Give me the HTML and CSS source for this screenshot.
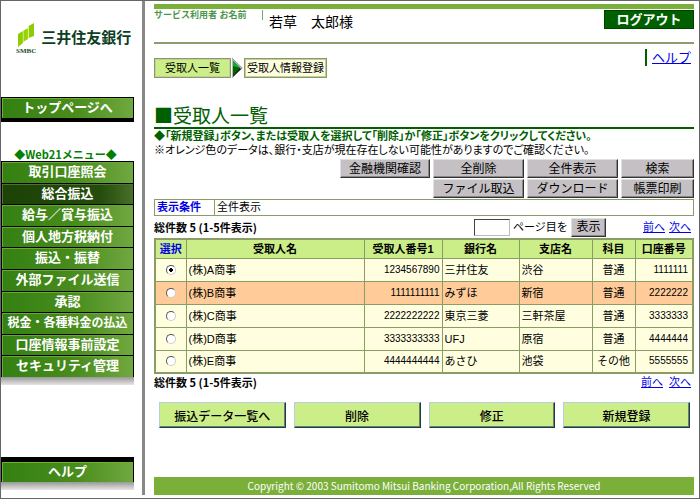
FILE: index.html
```html
<!DOCTYPE html>
<html lang="ja">
<head>
<meta charset="utf-8">
<title>受取人一覧</title>
<link rel="stylesheet" href="styles.css">
</head>
<body>
<div class="page">
  <aside class="side">
    <div class="brand">
      <div class="mark">
        <svg width="18" height="25" viewBox="0 0 18 25" aria-hidden="true">
          <path fill="#8ccc00" d="M1 12L6 9V21L1 25z"/>
          <path fill="#98d400" d="M6 9L11 6V17L6 20z"/>
          <path fill="#8ccc00" d="M11.500 4L17 1V14L11.500 16z"/>
          <path fill="none" stroke="#e4f4b8" stroke-width="0.800" d="M6.200 8V21M11.300 4V17"/>
        </svg>
        <span class="mark-text">SMBC</span>
      </div>
      <span class="brand-name">三井住友銀行</span>
    </div>
    <a class="bar bar-top" href="#">トップページへ</a>
    <nav class="menu-block">
      <h2 class="menu-title">◆Web21メニュー◆</h2>
      <div class="menu">
        <a class="item" href="#">取引口座照会</a>
        <a class="item current" href="#">総合振込</a>
        <a class="item" href="#">給与／賞与振込</a>
        <a class="item" href="#">個人地方税納付</a>
        <a class="item" href="#">振込・振替</a>
        <a class="item" href="#">外部ファイル送信</a>
        <a class="item" href="#">承認</a>
        <a class="item long" href="#">税金・各種料金の払込</a>
        <a class="item" href="#">口座情報事前設定</a>
        <a class="item" href="#">セキュリティ管理</a>
      </div>
      <div class="shade"></div>
    </nav>
    <div class="side-foot">
      <a class="bar bar-help" href="#">ヘルプ</a>
      <div class="shade"></div>
    </div>
  </aside>
  <main class="main">
    <header class="head">
      <span class="user-label">サービス利用者 お名前</span>
      <span class="user-name">若草　太郎様</span>
      <button class="logout" type="button">ログアウト</button>
    </header>
    <div class="trail">
      <span class="crumb on">受取人一覧</span>
      <svg class="arrow" width="11" height="20" viewBox="0 0 11 20" aria-hidden="true">
        <path fill="#222" d="M0 0L10.500 10L0 20z"/>
        <path fill="#b8b8b8" d="M0 0L10.500 10L9 11L1 3V20H0z"/>
        <path fill="#00b428" d="M1 3L8 10H1z"/>
        <path fill="#006400" d="M1 8L8 10L1 17z"/>
      </svg>
      <span class="crumb">受取人情報登録</span>
      <span class="help"><a href="#">ヘルプ</a></span>
    </div>
    <h1 class="title">■受取人一覧</h1>
    <p class="lead strong">◆「新規登録」ボタン、または受取人を選択して「削除」か「修正」ボタンをクリックしてください。</p>
    <p class="lead">※オレンジ色のデータは、銀行・支店が現在存在しない可能性がありますのでご確認ください。</p>
    <div class="tools">
      <button class="grey" type="button">金融機関確認</button>
      <button class="grey" type="button">全削除</button>
      <button class="grey" type="button">全件表示</button>
      <button class="grey" type="button">検索</button>
      <button class="grey second" type="button">ファイル取込</button>
      <button class="grey" type="button">ダウンロード</button>
      <button class="grey" type="button">帳票印刷</button>
    </div>
    <div class="cond"><span class="cond-label">表示条件</span><span class="cond-value">全件表示</span></div>
    <div class="pager">
      <span class="count">総件数 5 (1-5件表示)</span>
      <input class="page-no" id="page-no" type="text">
      <label class="page-label" for="page-no">ページ目を</label>
      <button class="grey go" type="button">表示</button>
      <span class="links"><a href="#">前へ</a><a href="#">次へ</a></span>
    </div>
    <table class="list">
      <colgroup><col class="c1"><col class="c2"><col class="c3"><col class="c4"><col class="c5"><col class="c6"><col class="c7"></colgroup>
      <thead>
        <tr><th class="pick">選択</th><th>受取人名</th><th>受取人番号1</th><th>銀行名</th><th>支店名</th><th>科目</th><th>口座番号</th></tr>
      </thead>
      <tbody>
        <tr><td class="mid"><input type="radio" name="payee" aria-label="(株)A商事" checked></td><td>(株)A商事</td><td class="num">1234567890</td><td>三井住友</td><td>渋谷</td><td class="mid">普通</td><td class="num acct">1111111</td></tr>
        <tr class="warn"><td class="mid"><input type="radio" name="payee" aria-label="(株)B商事"></td><td>(株)B商事</td><td class="num">1111111111</td><td>みずほ</td><td>新宿</td><td class="mid">普通</td><td class="num acct">2222222</td></tr>
        <tr><td class="mid"><input type="radio" name="payee" aria-label="(株)C商事"></td><td>(株)C商事</td><td class="num">2222222222</td><td>東京三菱</td><td>三軒茶屋</td><td class="mid">普通</td><td class="num acct">3333333</td></tr>
        <tr><td class="mid"><input type="radio" name="payee" aria-label="(株)D商事"></td><td>(株)D商事</td><td class="num">3333333333</td><td>UFJ</td><td>原宿</td><td class="mid">普通</td><td class="num acct">4444444</td></tr>
        <tr><td class="mid"><input type="radio" name="payee" aria-label="(株)E商事"></td><td>(株)E商事</td><td class="num">4444444444</td><td>あさひ</td><td>池袋</td><td class="mid">その他</td><td class="num acct">5555555</td></tr>
      </tbody>
    </table>
    <div class="pager bottom">
      <span class="count">総件数 5 (1-5件表示)</span>
      <span class="links"><a href="#">前へ</a><a href="#">次へ</a></span>
    </div>
    <div class="actions">
      <button class="act" type="button">振込データ一覧へ</button>
      <button class="act" type="button">削除</button>
      <button class="act" type="button">修正</button>
      <button class="act" type="button">新規登録</button>
    </div>
    <footer class="foot">Copyright © 2003 Sumitomo Mitsui Banking Corporation,All Rights Reserved</footer>
  </main>
</div>
</body>
</html>
```
FILE: styles.css
```css
* { box-sizing: border-box; }

body {
  margin: 0;
  background: #fff;
  color: #000;
  font: 11px/14px "Liberation Sans", "Noto Sans CJK JP", sans-serif;
}

h1, h2, p { margin: 0; }

button, input { font-family: inherit; }

a { color: #0000e6; }

.page {
  display: grid;
  grid-template-columns: 144px 1fr;
  min-height: calc(100vh - 1px);
  padding-bottom: 3px;
  border: 1px solid #666;
}

/* sidebar */
.side {
  display: flex;
  flex-direction: column;
  padding-right: 8px;
  border-right: 3px solid #888;
}

.brand {
  display: flex;
  align-items: flex-start;
  gap: 5px;
  height: 96px;
  padding: 21px 0 0 15px;
}

.mark {
  display: flex;
  flex-direction: column;
  align-items: center;
}

.mark-text {
  color: #1e4a2a;
  font: bold 7px/9px "Liberation Serif", serif;
}

.brand-name {
  padding-top: 6px;
  color: #0c4024;
  font-size: 15px;
  font-weight: bold;
  line-height: 20px;
}

.bar, .item {
  color: #fff;
  font-size: 13px;
  font-weight: bold;
  text-align: center;
  text-decoration: none;
  background: linear-gradient(90deg, #348012, #488c1c 55%, #70a840);
}

.bar {
  display: block;
  line-height: 20px;
  border: 1px solid #000;
  box-shadow: inset 1px 1px #6cb42c;
}

.bar-top { border-bottom-width: 4px; }

.bar-help { border-top-width: 5px; border-bottom: 0; }

.menu-block { margin-top: 26px; }

.menu-title {
  padding-right: 4px;
  color: #008000;
  font-family: "Noto Sans CJK JP", sans-serif;
  font-size: 11px;
  line-height: 13px;
  text-align: center;
}

.menu {
  display: grid;
  grid-auto-rows: 1fr;
  gap: 1px;
  height: 216px;
  padding: 1px 1px 0;
  background: #000;
}

.item {
  line-height: 20px;
  box-shadow: inset 1px 1px #6aa83c;
}

.item.current {
  background: linear-gradient(90deg, #1c4206, #244c0c 75%, #487028);
  box-shadow: inset 1px 1px #507038;
}

.item.long { font-size: 12px; }

.shade {
  height: 8px;
  background: linear-gradient(#999, #e8e4e4);
}

.side-foot { margin-top: auto; padding-bottom: 5px; }

/* main column */
.main {
  display: flex;
  flex-direction: column;
  padding: 3px 5px 0 9px;
}

.head {
  display: flex;
  align-items: flex-start;
  height: 40px;
  border-top: 5px solid #7ab03a;
  border-bottom: 2px solid #8c9c6c;
}

.user-label {
  width: 109px;
  margin-top: 1px;
  border-right: 1px solid #78a878;
  color: #4c964c;
  font-size: 9px;
  font-weight: bold;
  line-height: 10px;
  white-space: nowrap;
}

.user-name {
  padding: 3px 0 0 6px;
  font-size: 14px;
  line-height: 20px;
}

.logout {
  width: 90px;
  height: 19px;
  margin: 1px 0 0 auto;
  padding: 0;
  border: 1px solid #004000;
  background: #006000;
  color: #fff;
  font-size: 13px;
  font-weight: bold;
  line-height: 16px;
}

.trail {
  display: flex;
  align-items: flex-start;
  padding-top: 14px;
}

.crumb {
  padding: 0 2px;
  border: 1px solid #889a68;
  background: #ffffe0;
  line-height: 18px;
  box-shadow: inset 0 0 0 1px #c4ce9c;
}

.crumb.on { padding: 0 10px; background: #ccee88; }

.arrow { margin: 0 1px; }

.help {
  margin: -9px 3px 0 auto;
  padding-left: 5px;
  border-left: 2px solid #006000;
  font-size: 13px;
  line-height: 17px;
}

.title {
  margin-top: 24px;
  border-bottom: 2px solid #006000;
  color: #006000;
  font-family: "Noto Sans CJK JP", sans-serif;
  font-size: 19px;
  font-weight: 400;
  line-height: 25px;
}

.lead { font-feature-settings: "palt"; }

.lead.strong { color: #006000; font-weight: bold; }

.tools {
  display: grid;
  grid-template-columns: 90px 91px 91px 73px;
  justify-content: end;
  gap: 1px 3px;
  padding-top: 2px;
}

.grey {
  height: 19px;
  padding: 0;
  border: 1px solid;
  border-color: #e0e0e0 #333 #333 #e0e0e0;
  background: #c4c0c4;
  color: #000;
  font-size: 12px;
  line-height: 16px;
  box-shadow: inset -1px -1px #888;
}

.second { grid-column: 2; }

.cond {
  display: flex;
  margin-top: 1px;
  border: 1px solid #8a9c68;
  line-height: 15px;
}

.cond-label {
  width: 60px;
  padding-left: 2px;
  border-right: 1px solid #8a9c68;
  color: #0000e6;
  font-weight: bold;
}

.cond-value { padding-left: 2px; }

.pager {
  display: flex;
  align-items: center;
  height: 22px;
}

.count {
  width: 320px;
  font-family: "Noto Sans CJK JP", sans-serif;
  font-weight: bold;
}

.page-no {
  width: 36px;
  height: 17px;
  padding: 0 2px;
  border: 1px solid;
  border-color: #444 #bbb #bbb #444;
  background: #fff;
}

.page-label { width: 58px; padding-left: 3px; white-space: nowrap; }

.go { width: 35px; margin-left: 3px; }

.links {
  display: flex;
  gap: 4px;
  margin-left: auto;
  padding-right: 3px;
}

.pager.bottom { height: 15px; }

.bottom .links { gap: 6px; }

.list {
  width: 100%;
  table-layout: fixed;
  border-collapse: collapse;
  border: 2px solid #8a9c68;
}

.c1 { width: 31px; }
.c3 { width: 78px; }
.c4 { width: 77px; }
.c5 { width: 73px; }
.c6 { width: 43px; }
.c7 { width: 58px; }

.list th, .list td {
  height: 23px;
  padding: 0 2px;
  border: 1px solid #8a9c68;
  background: #ffffe0;
  text-align: left;
  white-space: nowrap;
}

.list th {
  height: 19px;
  padding: 0;
  background: #ccee88;
  text-align: center;
}

.list .pick { color: #0000e6; }

.list .warn td { background: #ffcc99; }

.list .mid { text-align: center; }

.list .num { text-align: right; font-size: 10px; }

.list .acct { padding-right: 4px; }

.list input {
  display: block;
  width: 10px;
  height: 10px;
  margin: 0 auto;
  appearance: none;
  border: 1px solid;
  border-color: #555 #ccc #ccc #555;
  border-radius: 50%;
  background: #fff;
}

.list input:checked { background: radial-gradient(circle, #000 2px, #fff 2px); }

.actions {
  display: grid;
  grid-template-columns: repeat(4, 1fr);
  gap: 8px;
  padding: 13px 4px 0 5px;
}

.act {
  height: 26px;
  padding: 0;
  border: 1px solid;
  border-color: #b8cce8 #183860 #183860 #b8cce8;
  background: #ccee88;
  color: #000;
  font-size: 12px;
  font-weight: 500;
  box-shadow: inset -1px -1px #688850;
}

.foot {
  margin-top: auto;
  background: #7ab03a;
  color: #fff;
  font-family: "Noto Sans CJK JP", sans-serif;
  font-size: 10px;
  line-height: 18px;
  text-align: center;
}
```
